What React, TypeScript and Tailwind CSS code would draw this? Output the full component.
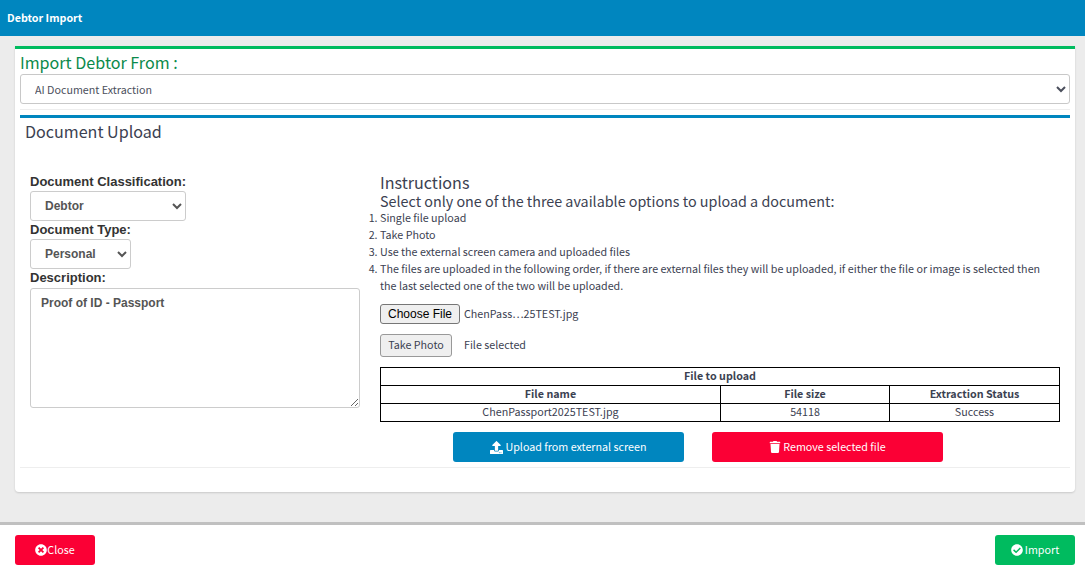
import { FaUpload, FaTrash, FaTimesCircle, FaCheckCircle } from "react-icons/fa";

const SANS = "font-['Noto_Sans_CJK_SC',sans-serif]";
const ARIAL = "font-['Liberation_Sans',Arial,sans-serif]";

const STEPS = [
  "Single file upload",
  "Take Photo",
  "Use the external screen camera and uploaded files",
  "The files are uploaded in the following order, if there are external files they will be uploaded, if either the file or image is selected then the last selected one of the two will be uploaded.",
];

export default function App() {
  return (
    <div className={`${SANS} w-[1085px] h-[575px] overflow-hidden bg-white text-[#3b4151] flex flex-col`}>
      <div className="h-[36px] shrink-0 bg-[#0086bf] flex items-center px-[7px]">
        <span className="text-[10.72px] font-bold text-white">Debtor Import</span>
      </div>

      <div className="h-[486px] shrink-0 bg-[#ececec] pl-[15px] pr-[10px] pt-[10px]">
        <div className="h-[446px] bg-white border-t-[3px] border-[#00bb5f] rounded-b-[4px] shadow-[0_1px_2px_rgba(0,0,0,0.15)] px-[5px] flex flex-col">
          <div className="text-[16.1px] leading-[27px] text-[#0b8a4b] h-[25px]">Import Debtor From :</div>
          <select className="h-[30px] w-full shrink-0 rounded-[3px] border border-[#c8c8c8] bg-white pl-[10px] text-[10.72px] text-[#4b4f5c]">
            <option>AI Document Extraction</option>
          </select>
          <div className="mt-[5px] border-t border-[#eeeeee]" />

          <div className="mt-[5px] border-t-[3px] border-[#0086bf] flex-1 flex flex-col">
            <div className="text-[16.1px] leading-[25px] px-[5px] h-[25px] mt-[1px] text-[#3b4151]">Document Upload</div>

            <div className="flex mt-[29px]">
              <div className={`${ARIAL} w-[360px] shrink-0 pl-[10px] font-bold text-[13px] text-[#333333] flex flex-col items-start`}>
                <label className="leading-[16px] h-[16px] mt-[1px]">Document Classification:</label>
                <select className="mt-[1px] h-[30px] w-[156px] rounded-[3px] border border-[#cccccc] bg-white pl-[10px] text-[12px] font-bold text-[#555555]">
                  <option>Debtor</option>
                </select>
                <label className="leading-[16px] h-[16px] mt-[1px]">Document Type:</label>
                <select className="mt-[1px] h-[30px] w-[101px] rounded-[3px] border border-[#cccccc] bg-white pl-[10px] text-[12px] font-bold text-[#555555]">
                  <option>Personal</option>
                </select>
                <label className="leading-[16px] h-[16px] mt-[1px]">Description:</label>
                <textarea
                  readOnly
                  value="Proof of ID - Passport"
                  className="mt-[2px] h-[120px] w-[330px] rounded-[3px] border border-[#cccccc] px-[10px] py-[5px] text-[12px] font-bold text-[#555555] outline-none"
                />
              </div>

              <div className="w-[680px] flex flex-col">
                <div className="text-[16.1px] leading-[18px] h-[18px] text-[#3b4151]">Instructions</div>
                <div className="text-[14.33px] leading-[20px] h-[18px] text-[#3b4151]">Select only one of the three available options to upload a document:</div>
                <ol className="list-decimal pr-[16px] text-[10.72px] leading-[17px] text-[#3b4151]">
                  {STEPS.map((s) => (
                    <li key={s}>{s}</li>
                  ))}
                </ol>

                <div className="mt-[10px] flex items-center h-[20px]">
                  <button className={`${ARIAL} h-[20px] w-[80px] rounded-[3px] border border-[#767676] bg-[#efefef] text-[12px] text-black`}>Choose File</button>
                  <span className="ml-[4px] text-[10.72px]">ChenPass…25TEST.jpg</span>
                </div>
                <div className="mt-[10px] flex items-center h-[23px]">
                  <button className="h-[23px] w-[72px] rounded-[3px] border border-[#999999] bg-[#efefef] text-[10.72px] text-[#3b4151]">Take Photo</button>
                  <span className="ml-[12px] text-[10.72px]">File selected</span>
                </div>

                <table className="mt-[10px] w-[680px] table-fixed border-collapse border border-black text-[10.72px] leading-[16px] text-center">
                  <colgroup>
                    <col className="w-[340px]" />
                    <col className="w-[169px]" />
                    <col />
                  </colgroup>
                  <thead>
                    <tr>
                      <th colSpan={3} className="border border-black h-[18px] p-0 pb-[1px] font-bold">File to upload</th>
                    </tr>
                    <tr>
                      <th className="border border-black h-[18px] p-0 pb-[1px] font-bold">File name</th>
                      <th className="border border-black h-[18px] p-0 pb-[1px] font-bold">File size</th>
                      <th className="border border-black h-[18px] p-0 pb-[1px] font-bold">Extraction Status</th>
                    </tr>
                  </thead>
                  <tbody>
                    <tr>
                      <td className="border border-black h-[18px] p-0 pb-[1px]">ChenPassport2025TEST.jpg</td>
                      <td className="border border-black h-[18px] p-0 pb-[1px]">54118</td>
                      <td className="border border-black h-[18px] p-0 pb-[1px]">Success</td>
                    </tr>
                  </tbody>
                </table>

                <div className="mt-[10px] ml-[73px] flex gap-[28px]">
                  <button className="h-[30px] w-[231px] rounded-[3px] bg-[#0086bf] text-white text-[10.72px] flex items-center justify-center gap-[2px]">
                    <FaUpload size={13} />
                    Upload from external screen
                  </button>
                  <button className="h-[30px] w-[231px] rounded-[3px] bg-[#fb0035] text-white text-[10.72px] flex items-center justify-center gap-[2px]">
                    <FaTrash size={12} />
                    Remove selected file
                  </button>
                </div>
              </div>
            </div>

            <div className="mt-[5px] border-t border-[#eeeeee]" />
          </div>
        </div>
      </div>

      <div className="flex-1 border-t-[3px] border-[#c0c0c0] bg-white flex justify-between pl-[15px] pr-[10px] pt-[10px]">
        <button className="h-[30px] w-[80px] rounded-[3px] bg-[#fb0035] text-white text-[10.72px] flex items-center justify-center">
          <FaTimesCircle size={12} />
          Close
        </button>
        <button className="h-[30px] w-[80px] rounded-[3px] bg-[#00bb5f] text-white text-[10.72px] flex items-center justify-center gap-[2px]">
          <FaCheckCircle size={12} />
          Import
        </button>
      </div>
    </div>
  );
}
